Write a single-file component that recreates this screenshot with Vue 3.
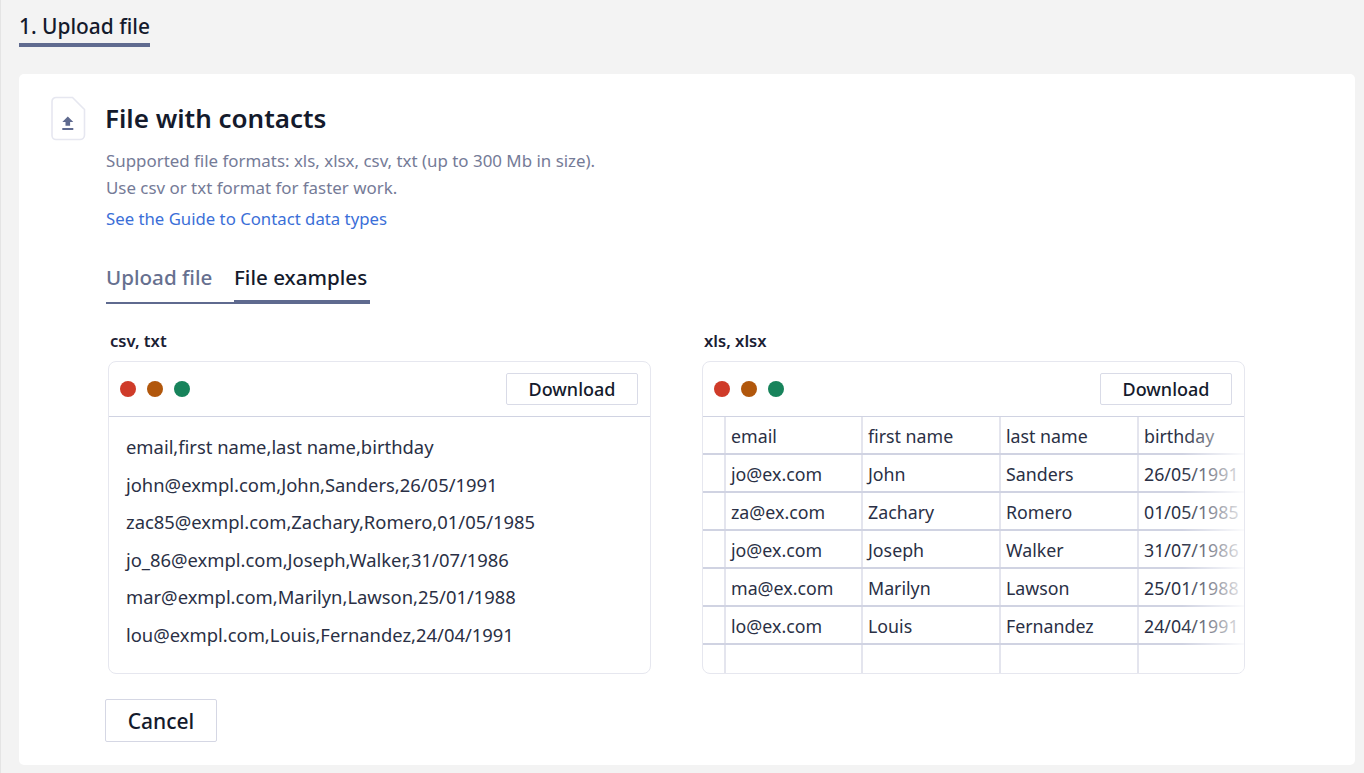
<template>
  <div class="page">
    <div class="step-bar">
      <div class="step-tab">1. Upload file</div>
    </div>

    <div class="card">
      <div class="file-icon">
        <svg width="36" height="45" viewBox="0 0 36 45">
          <path d="M5 1.500h16.500L33.500 13.500V39a4.500 4.500 0 0 1-4.500 4.500H5A4 4 0 0 1 1 39.500V5.500a4 4 0 0 1 4-4z" fill="#fff" stroke="#e6e7f0" stroke-width="1.600" />
          <path d="M16.800 20.500l5.500 5.500h-3.200v3.800h-4.600V26H11.300z" fill="#5f6a8f" />
          <rect x="11.300" y="32" width="11" height="2" fill="#5f6a8f" />
        </svg>
      </div>

      <div class="content">
        <h1 class="title">File with contacts</h1>
        <p class="hint">Supported file formats: xls, xlsx, csv, txt (up to 300 Mb in size).</p>
        <p class="hint">Use csv or txt format for faster work.</p>
        <a class="guide" href="#">See the Guide to Contact data types</a>

        <div class="tabs">
          <div class="tab">Upload file</div>
          <div class="tab active">File examples</div>
        </div>

        <div class="examples">
          <section class="example">
            <div class="example-label">csv, txt</div>
            <div class="window">
              <div class="toolbar">
                <span class="dot red"></span>
                <span class="dot orange"></span>
                <span class="dot green"></span>
                <button class="download">Download</button>
              </div>
              <div class="csv">
                <div v-for="line in csvLines" :key="line" class="csv-line">{{ line }}</div>
              </div>
            </div>
          </section>

          <section class="example">
            <div class="example-label">xls, xlsx</div>
            <div class="window">
              <div class="toolbar">
                <span class="dot red"></span>
                <span class="dot orange"></span>
                <span class="dot green"></span>
                <button class="download">Download</button>
              </div>
              <div class="sheet">
                <div v-for="(row, i) in rows" :key="i" class="sheet-row">
                  <div class="cell index"></div>
                  <div v-for="(val, j) in row" :key="j" class="cell">{{ val }}</div>
                </div>
                <div class="sheet-fade"></div>
              </div>
            </div>
          </section>
        </div>

        <button class="cancel">Cancel</button>
      </div>
    </div>
  </div>
</template>

<script setup>
const csvLines = [
  'email,first name,last name,birthday',
  'john@exmpl.com,John,Sanders,26/05/1991',
  'zac85@exmpl.com,Zachary,Romero,01/05/1985',
  'jo_86@exmpl.com,Joseph,Walker,31/07/1986',
  'mar@exmpl.com,Marilyn,Lawson,25/01/1988',
  'lou@exmpl.com,Louis,Fernandez,24/04/1991'
]

const rows = [
  ['email', 'first name', 'last name', 'birthday'],
  ['jo@ex.com', 'John', 'Sanders', '26/05/1991'],
  ['za@ex.com', 'Zachary', 'Romero', '01/05/1985'],
  ['jo@ex.com', 'Joseph', 'Walker', '31/07/1986'],
  ['ma@ex.com', 'Marilyn', 'Lawson', '25/01/1988'],
  ['lo@ex.com', 'Louis', 'Fernandez', '24/04/1991'],
  ['', '', '', '']
]
</script>

<style>
html,
body {
  margin: 0;
  background: #f3f3f3;
}
</style>

<style scoped>
.page {
  box-sizing: border-box;
  height: 773px;
  padding: 0 9px 8px 18px;
  overflow: hidden;
  background: #f3f3f3;
  font-family: "Noto Sans", "Liberation Sans", sans-serif;
  color: #1a2033;
  border-left: 1px solid #e4e4e4;
}

.step-bar {
  display: flex;
  height: 47px;
  margin-bottom: 27px;
}

.step-tab {
  box-sizing: border-box;
  height: 47px;
  padding-top: 12px;
  font-size: 20.900px;
  line-height: 28px;
  font-weight: 500;
  color: #141a2c;
  border-bottom: 4px solid #5f6a8f;
  white-space: nowrap;
}

.card {
  display: flex;
  box-sizing: border-box;
  height: 691px;
  padding: 22px 0 0 32px;
  background: #fff;
  border-radius: 5px;
}

.file-icon {
  width: 55px;
  flex: none;
  height: 45px;
}

.file-icon svg {
  display: block;
}

.content {
  flex: 1;
  min-width: 0;
}

.title {
  margin: 3px 0 10px -1px;
  font-size: 26px;
  line-height: 38px;
  font-weight: 600;
  color: #141a2c;
}

.hint {
  margin: 0;
  font-size: 16.900px;
  line-height: 27px;
  color: #757b97;
}

.guide {
  display: block;
  margin-top: 4px;
  font-size: 16.750px;
  line-height: 27px;
  color: #3b6fd8;
  text-decoration: none;
}

.tabs {
  display: flex;
  align-items: flex-end;
  margin-top: 26px;
}

.tab {
  box-sizing: border-box;
  height: 44px;
  width: 128px;
  padding-top: 3px;
  font-size: 20.600px;
  line-height: 28px;
  font-weight: 500;
  color: #66708f;
  border-bottom: 2px solid #5f6a8f;
  white-space: nowrap;
}

.tab.active {
  width: 136px;
  height: 46px;
  padding-top: 5px;
  color: #141a2c;
  border-bottom-width: 4px;
}

.examples {
  display: flex;
  gap: 51px;
  margin: 25px 0 25px 2px;
}

.example {
  width: 543px;
}

.example-label {
  height: 32px;
  padding-left: 2px;
  font-size: 16.600px;
  line-height: 24px;
  font-weight: 600;
  color: #1a2033;
}

.window {
  box-sizing: border-box;
  height: 313px;
  overflow: hidden;
  background: #fff;
  border: 1px solid #e6e7ef;
  border-radius: 8px;
}

.toolbar {
  display: flex;
  align-items: center;
  gap: 11px;
  box-sizing: border-box;
  height: 55px;
  padding: 0 12px 0 11px;
  border-bottom: 1px solid #d0d3e2;
}

.dot {
  width: 16px;
  height: 16px;
  border-radius: 50%;
}

.red { background: #cf3b29; }
.orange { background: #b1570c; }
.green { background: #17835b; }

.download {
  box-sizing: border-box;
  width: 132px;
  height: 32px;
  margin-left: auto;
  padding: 0;
  background: #fff;
  border: 1px solid #d9dbe7;
  border-radius: 2px;
  font-family: inherit;
  font-size: 18px;
  font-weight: 500;
  color: #141a2c;
}

.csv {
  padding: 11px 17px;
}

.csv-line {
  font-size: 18.400px;
  line-height: 37.600px;
  color: #2a3045;
  white-space: nowrap;
}

.sheet {
  position: relative;
}

.sheet-row {
  display: grid;
  grid-template-columns: 23px 137px 138px 138px 108px;
  box-sizing: border-box;
  height: 38px;
  border-bottom: 2px solid #d0d3e2;
}

.sheet-row:last-of-type {
  border-bottom: 0;
}

.cell {
  box-sizing: border-box;
  padding-left: 5px;
  border-right: 2px solid #e4e5ee;
  font-size: 17.800px;
  line-height: 38px;
  color: #2a3045;
  white-space: nowrap;
  overflow: hidden;
}

.cell:last-child {
  border-right: 0;
}

/* right edge of the sheet fades out */
.sheet-fade {
  position: absolute;
  top: 0;
  right: 0;
  bottom: 0;
  width: 62px;
  background: linear-gradient(to right, rgba(255, 255, 255, 0), rgba(255, 255, 255, 0.92));
}

.cancel {
  display: block;
  box-sizing: border-box;
  width: 112px;
  height: 43px;
  margin-left: -1px;
  padding: 0;
  background: #fff;
  border: 1px solid #d5d7e4;
  border-radius: 2px;
  font-family: inherit;
  font-size: 21px;
  font-weight: 500;
  color: #141a2c;
}
</style>
